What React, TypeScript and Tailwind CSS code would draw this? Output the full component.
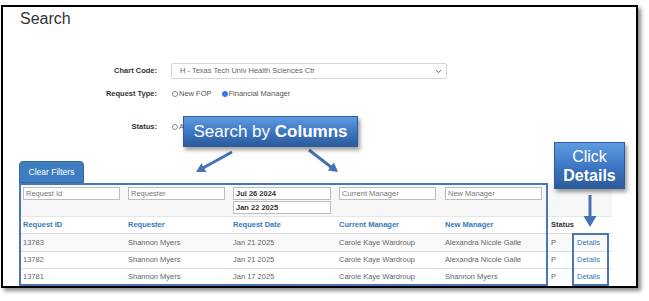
import React from "react";

const Radio = ({ checked = false }: { checked?: boolean }) => (
  <span
    className={
      checked
        ? "inline-block w-[6px] h-[6px] rounded-full bg-[#2f7ff0] border border-[#1f6fe0] mr-[1px]"
        : "inline-block w-[6px] h-[6px] rounded-full bg-white border border-[#8a8a8a] mr-[1px]"
    }
  />
);

const rows = [
  ["13783", "Shannon Myers", "Jan 21 2025", "Carole Kaye Wardroup", "Alexandra Nicole Galle"],
  ["13782", "Shannon Myers", "Jan 21 2025", "Carole Kaye Wardroup", "Alexandra Nicole Galle"],
  ["13781", "Shannon Myers", "Jan 17 2025", "Carole Kaye Wardroup", "Shannon Myers"],
];

export default function App() {
  return (
    <div className="relative w-[649px] h-[301px] bg-white overflow-hidden font-['Liberation_Sans',Arial,sans-serif]">
      <div className="absolute left-[1px] top-[5px] w-[637px] h-[283px] border-2 border-black bg-white shadow-[3px_3px_4px_rgba(0,0,0,0.45)]">
        <div className="flex flex-col">
          <div className="mt-[3px] ml-[17px] text-[16px] leading-[18px] text-[#333]">Search</div>

          <div className="mt-[35px] flex items-center h-[16px]">
            <div className="w-[154px] text-right text-[7.5px] font-bold text-[#333]">Chart Code:</div>
            <div className="ml-[14px] w-[276px] h-[16px] border border-[#d6d6d6] rounded-[2px] flex items-center justify-between pl-[8px] pr-[4px]">
              <span className="text-[7.5px] text-[#666]">H - Texas Tech Univ Health Sciences Ctr</span>
              <svg width="7" height="5" viewBox="0 0 7 5">
                <path d="M1 1.2 L3.5 3.6 L6 1.2" stroke="#666" strokeWidth="1" fill="none" />
              </svg>
            </div>
          </div>

          <div className="mt-[9px] flex items-center h-[12px]">
            <div className="w-[154px] text-right text-[7.5px] font-bold text-[#333]">Request Type:</div>
            <div className="ml-[15px] flex items-center text-[7.5px] text-[#555]">
              <Radio />
              <span>New FOP</span>
              <span className="ml-[10px]" />
              <Radio checked />
              <span>Financial Manager</span>
            </div>
          </div>

          <div className="mt-[21px] flex items-center h-[12px]">
            <div className="w-[154px] text-right text-[7.5px] font-bold text-[#333]">Status:</div>
            <div className="ml-[15px] flex items-center text-[7.5px] text-[#555] gap-[5px]">
              <span className="flex items-center"><Radio /><span>Approved</span></span>
              <span className="flex items-center"><Radio /><span>Pending</span></span>
              <span className="flex items-center"><Radio /><span>Denied</span></span>
              <span className="flex items-center"><Radio /><span>Completed</span></span>
              <span className="flex items-center"><Radio /><span>All</span></span>
            </div>
          </div>

          <div className="mt-[28px] ml-[16px] w-[65px] h-[22px] rounded-t-[4px] bg-[#3d7dc0] border border-[#2e6da4] flex items-center justify-center text-[8.5px] text-white">
            Clear Filters
          </div>

          <div className="mt-[2px] ml-[18px] w-[591px] text-[7.5px]">
            <div className="flex h-[31px] bg-[#f7f7f7] pt-[2px]">
              {["Request Id", "Requester"].map((p) => (
                <div key={p} className="w-[105px] pl-[2px]">
                  <div className="w-[97px] h-[13px] border border-[#bdbdbd] bg-white pl-[2px] flex items-center text-[#777]">{p}</div>
                </div>
              ))}
              <div className="w-[106px] pl-[2px] flex flex-col gap-[1px]">
                <div className="w-[98px] h-[13px] border border-[#bdbdbd] bg-white pl-[2px] flex items-center font-bold text-[#333]">Jul 26 2024</div>
                <div className="w-[98px] h-[13px] border border-[#bdbdbd] bg-white pl-[2px] flex items-center font-bold text-[#333]">Jan 22 2025</div>
              </div>
              {["Current Manager", "New Manager"].map((p) => (
                <div key={p} className="w-[106px] pl-[2px]">
                  <div className="w-[97px] h-[13px] border border-[#bdbdbd] bg-white pl-[2px] flex items-center text-[#777]">{p}</div>
                </div>
              ))}
              <div className="w-[63px]" />
            </div>

            <div className="flex h-[17px] items-center font-bold border-t border-[#e6e6e6]">
              <div className="w-[105px] pl-[2px] text-[#337ab7]">Request ID</div>
              <div className="w-[105px] pl-[2px] text-[#337ab7]">Requester</div>
              <div className="w-[106px] pl-[2px] text-[#337ab7]">Request Date</div>
              <div className="w-[106px] pl-[2px] text-[#337ab7]">Current Manager</div>
              <div className="w-[106px] pl-[2px] text-[#337ab7]">New Manager</div>
              <div className="w-[24px] pl-[2px] text-[#333]">Status</div>
              <div className="w-[39px]" />
            </div>

            {rows.map((r, i) => (
              <div
                key={r[0]}
                className={
                  i === 0
                    ? "flex h-[18px] items-center border-t border-[#dddddd] text-[#666] bg-[#f9f9f9]"
                    : "flex h-[17px] items-center border-t border-[#dddddd] text-[#666]"
                }
              >
                <div className="w-[105px] pl-[2px]">{r[0]}</div>
                <div className="w-[105px] pl-[2px]">{r[1]}</div>
                <div className="w-[106px] pl-[2px]">{r[2]}</div>
                <div className="w-[106px] pl-[2px]">{r[3]}</div>
                <div className="w-[106px] pl-[2px]">{r[4]}</div>
                <div className="w-[24px] pl-[2px]">P</div>
                <div className="w-[39px] pl-[4px] text-[#337ab7]">Details</div>
              </div>
            ))}
          </div>
        </div>
      </div>

      {/* highlight boxes */}
      <div className="absolute left-[19px] top-[183px] w-[529px] h-[103px] border-2 border-[#4a77b4]" />
      <div className="absolute left-[572px] top-[233px] w-[37px] h-[53px] border-2 border-[#4a77b4]" />

      {/* arrows */}
      <svg className="absolute left-0 top-0 pointer-events-none" width="649" height="301" viewBox="0 0 649 301">
        <line x1="232" y1="152" x2="203" y2="168" stroke="#4472b4" strokeWidth="3" />
        <polygon points="196,172 206.3,172 201.5,163.2" fill="#4472b4" />
        <line x1="309" y1="150" x2="331" y2="167" stroke="#4472b4" strokeWidth="3" />
        <polygon points="338,172 327.8,170.6 333.8,162.6" fill="#4472b4" />
        <line x1="590" y1="195" x2="590" y2="218" stroke="#4472b4" strokeWidth="3" />
        <polygon points="583.5,216 596.5,216 590,227" fill="#4472b4" />
      </svg>

      {/* callouts */}
      <div className="absolute left-[183px] top-[116px] w-[175px] h-[31px] border border-[#2f5f9a] bg-linear-to-b from-[#5e9be0] via-[#3f78c4] to-[#2b5b9c] shadow-[2px_3px_4px_rgba(0,0,0,0.4)] flex items-center justify-center text-white text-[17px] leading-[20px]">
        <span>Search by&nbsp;</span>
        <span className="font-bold">Columns</span>
      </div>
      <div className="absolute left-[554px] top-[142px] w-[71px] h-[47px] border border-[#2f5f9a] bg-linear-to-b from-[#5e9be0] via-[#3f78c4] to-[#2b5b9c] shadow-[2px_3px_4px_rgba(0,0,0,0.4)] flex flex-col items-center justify-center text-white text-[16px] leading-[19px]">
        <span>Click</span>
        <span className="font-bold">Details</span>
      </div>
    </div>
  );
}
